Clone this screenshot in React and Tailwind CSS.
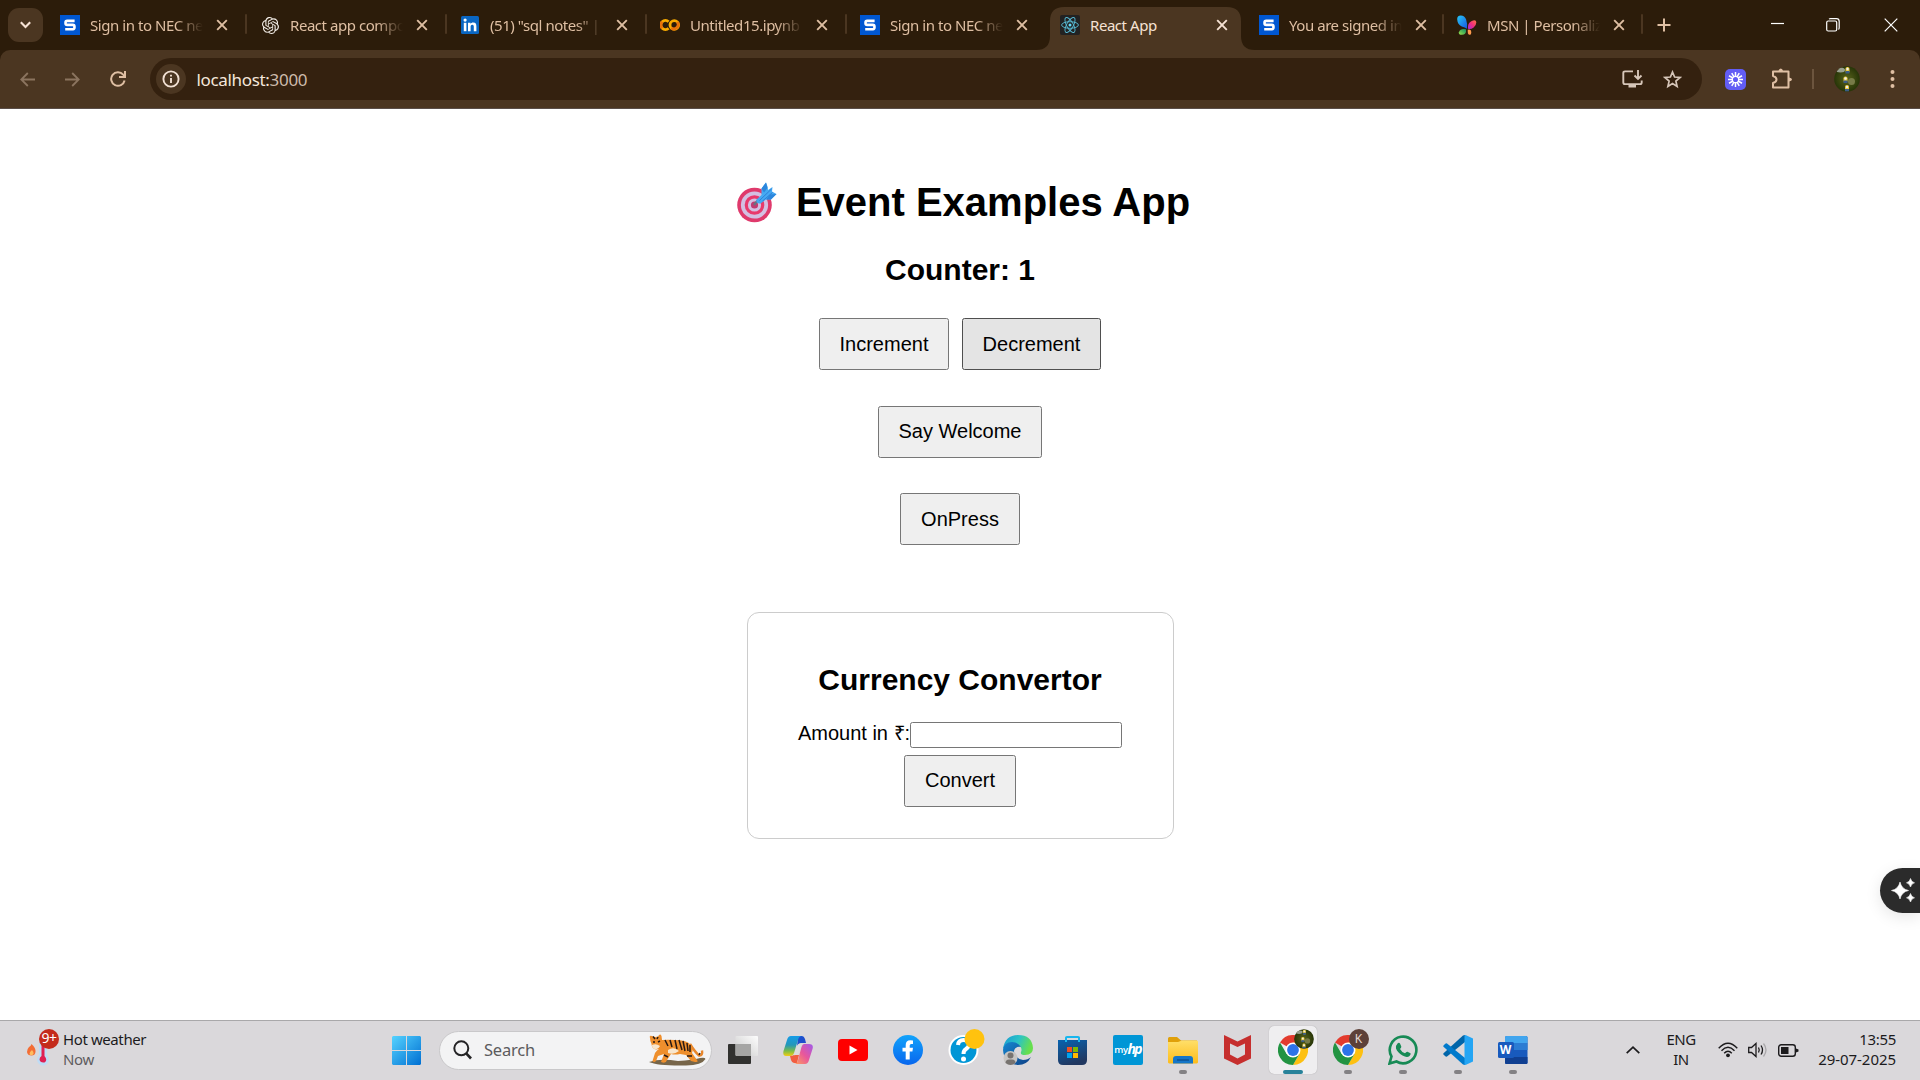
import React from "react";
import { SiOpenai } from "react-icons/si";

const SFavicon = () => (
  <svg width="20" height="20" viewBox="0 0 20 20">
    <rect width="20" height="20" fill="#0057d2" />
    <path d="M14.6 5.9H7.2Q5.5 5.9 5.5 7.9T7.2 9.9H12.8Q14.5 9.9 14.5 12T12.8 14.3H5.2" fill="none" stroke="#fff" strokeWidth="2.6" />
  </svg>
);

const OpenAIFavicon = () => <SiOpenai size={17} color="#f4efe9" />;

const LinkedInFavicon = () => (
  <svg width="18" height="18" viewBox="0 0 18 18">
    <rect width="18" height="18" rx="1.5" fill="#0a66c2" />
    <g fill="#fff">
      <circle cx="4.1" cy="4.1" r="1.6" />
      <rect x="2.8" y="6.8" width="2.6" height="8.4" />
      <path d="M7 6.8h2.5v1.2c.5-.8 1.4-1.4 2.7-1.4 2.6 0 3.2 1.6 3.2 4v4.6h-2.6v-4.2c0-1.2-.2-2.2-1.5-2.2s-1.7 1-1.7 2.2v4.2H7z" />
    </g>
  </svg>
);

const ColabFavicon = () => (
  <svg width="20" height="20" viewBox="0 0 20 20" fill="none" strokeWidth="2.8">
    <path d="M8.600 6.800A4.500 4.500 0 1 0 8.600 13.200" stroke="#f9ab00" />
    <path d="M2.300 6.800A4.500 4.500 0 0 0 2.300 13.200" stroke="#e8710a" />
    <circle cx="14.300" cy="10" r="4.300" stroke="#f9ab00" />
    <path d="M17.300 7A4.300 4.300 0 0 1 11.300 13" stroke="#e8710a" />
  </svg>
);

const ReactFavicon = () => (
  <svg width="20" height="20" viewBox="0 0 20 20">
    <rect width="20" height="20" rx="2" fill="#222" />
    <g transform="translate(10 10)" fill="none" stroke="#58bcd6" strokeWidth=".9">
      <ellipse rx="8.4" ry="3.3" />
      <ellipse rx="8.4" ry="3.3" transform="rotate(60)" />
      <ellipse rx="8.4" ry="3.3" transform="rotate(120)" />
      <circle r="1.5" fill="#61dafb" stroke="none" />
    </g>
  </svg>
);

const MsnFavicon = () => (
  <svg width="21" height="21" viewBox="0 0 21 21">
    <defs>
      <linearGradient id="msnA" x1="0" y1="0" x2="1" y2="1"><stop offset="0" stopColor="#28c7f5" /><stop offset="1" stopColor="#1556e0" /></linearGradient>
      <linearGradient id="msnB" x1="1" y1="0" x2="0" y2="1"><stop offset="0" stopColor="#ff7340" /><stop offset=".5" stopColor="#f02d7c" /><stop offset="1" stopColor="#a02be0" /></linearGradient>
      <linearGradient id="msnC" x1="1" y1="0" x2="0" y2="1"><stop offset="0" stopColor="#0c8f62" /><stop offset="1" stopColor="#9be04a" /></linearGradient>
    </defs>
    <path d="M.2 4Q0 0 4 0Q8 0 9.5 4Q11 8 10.5 14Q8.5 12.5 5 11.5Q.5 9.5 .2 4z" fill="url(#msnA)" />
    <path d="M11.5 14Q11 8 15 6Q20 3.5 20.3 7Q20.3 10 17.5 12.5Q15 14.5 11.5 14z" fill="url(#msnB)" />
    <path d="M9.5 14.5Q10 20.3 5 20.3Q1.5 20.3 2 17.5Q3.5 13.5 9.5 14.5z" fill="url(#msnC)" />
    <path d="M11.3 15Q15 14 15 18Q15 20.5 12.8 20.3Q11 20 11.3 15z" fill="#ff9a4d" />
  </svg>
);

const tabs = [
  { icon: SFavicon, title: "Sign in to NEC ne", width: "w-[200px]", sep: true },
  { icon: OpenAIFavicon, title: "React app compo", width: "w-[200px]", sep: true },
  { icon: LinkedInFavicon, title: "(51) \"sql notes\" |", width: "w-[200px]", sep: true },
  { icon: ColabFavicon, title: "Untitled15.ipynb", width: "w-[200px]", sep: true },
  { icon: SFavicon, title: "Sign in to NEC ne", width: "w-[200px]" },
  { icon: ReactFavicon, title: "React App", width: "w-[199px]", active: true },
  { icon: SFavicon, title: "You are signed in", width: "w-[198px]", sep: true },
  { icon: MsnFavicon, title: "MSN | Personaliz", width: "w-[199px]", sep: true },
];

const CloseX = () => (
  <svg width="12" height="12" viewBox="0 0 12 12" fill="none" stroke="currentColor" strokeWidth="1.9">
    <path d="M1.2 1.2L10.8 10.8M10.8 1.2L1.2 10.8" />
  </svg>
);

function Tab({ icon: Icon, title, width, active, sep }) {
  return (
    <div className={`relative h-[50px] shrink-0 ${width} ${active ? "text-[#f6e2d4]" : "text-[#dfbfa3]"}`}>
      {active && (
        <svg className="absolute -left-[10px] top-[7px]" width="219" height="43" viewBox="0 0 219 43">
          <path d="M0 43Q14 43 14 29V14Q14 0 28 0H191Q205 0 205 14V29Q205 43 219 43z" fill="#4b3621" />
        </svg>
      )}
      <div className="relative flex h-full items-center pl-[14px]">
        <span className="flex w-5 justify-center"><Icon /></span>
        <span className={`ml-[10px] w-[113px] whitespace-nowrap text-[15px] tracking-[-0.45px] ${active ? "" : "[mask-image:linear-gradient(to_right,black_76%,transparent_100%)]"}`}>{title}</span>
        <span className="ml-[13px]"><CloseX /></span>
        {sep && <span className="absolute right-[-1px] top-[14px] h-5 w-[2px] rounded bg-[#4b3621]" />}
      </div>
    </div>
  );
}

const Minion = ({ size }) => (
  <svg width={size} height={size} viewBox="0 0 26 26">
    <defs>
      <clipPath id={`av${size}`}><circle cx="13" cy="13" r="12.8" /></clipPath>
      <radialGradient id={`ag${size}`}><stop offset="0" stopColor="#59631c" /><stop offset="1" stopColor="#263407" /></radialGradient>
    </defs>
    <g clipPath={`url(#av${size})`}>
      <rect width="26" height="26" fill={`url(#ag${size})`} />
      <ellipse cx="6.5" cy="4" rx="4.5" ry="2.5" fill="#98a090" />
      <circle cx="17.5" cy="15.5" r="3.5" fill="#777b47" />
      {[[13.5, 4], [11.5, 13.5], [13, 22]].map(([x, y]) => (
        <g key={y}>
          <rect x={x - 2} y={y - 3} width="4" height="6" rx="1.8" fill="#e8c63c" />
          <rect x={x - 2} y={y + 1} width="4" height="2.5" fill="#3b5c86" />
          <circle cx={x} cy={y - 1} r="1.2" fill="#eee" />
        </g>
      ))}
    </g>
  </svg>
);

function Chrome() {
  return (
    <header className="h-[109px] shrink-0 bg-[#2c1c0a] font-['Noto_Sans',sans-serif]">
      <div className="flex h-[50px]">
        <div className="flex w-[46px] items-center pl-2">
          <div className="flex h-[34px] w-[35px] items-center justify-center rounded-[11px] bg-[#4b3621]">
            <svg width="11" height="8" viewBox="0 0 11 8" fill="none" stroke="#f6e2d4" strokeWidth="2.1"><path d="M.8 1.2L5.5 5.9L10.2 1.2" /></svg>
          </div>
        </div>
        {tabs.map((t, i) => <Tab key={i} {...t} />)}
        <div className="flex items-center pl-[15px]">
          <svg width="14" height="14" viewBox="0 0 14 14" stroke="#dfbfa3" strokeWidth="2"><path d="M7 .5V13.5M.5 7H13.5" /></svg>
        </div>
        <div className="ml-auto flex items-center pr-[22px]">
          <svg width="13" height="14" viewBox="0 0 13 14" stroke="#fff" strokeWidth="1.2"><path d="M0 5.5H13" /></svg>
          <svg className="ml-[42px]" width="14" height="14" viewBox="0 0 14 14" fill="none" stroke="#fff" strokeWidth="1.2"><rect x=".7" y="3" width="10" height="10" rx="1.5" /><path d="M3 1Q3.5 .7 4.5 .7H10.5Q13.2 .7 13.2 3.5V9.5Q13.2 11 12.5 11.5" /></svg>
          <svg className="ml-[44px]" width="14" height="14" viewBox="0 0 14 14" stroke="#fff" strokeWidth="1.2"><path d="M.7 .7L13.3 13.3M13.3 .7L.7 13.3" /></svg>
        </div>
      </div>
      <div className="flex h-[58px] items-center rounded-t-[10px] bg-[#4b3621]">
        <svg className="ml-[20px]" width="15" height="15" viewBox="0 0 15 15" fill="none" stroke="#8b745f" strokeWidth="1.8"><path d="M15 7.5H1.5M7.8 1L1.3 7.5L7.8 14" /></svg>
        <svg className="ml-[30px]" width="15" height="15" viewBox="0 0 15 15" fill="none" stroke="#8b745f" strokeWidth="1.8"><path d="M0 7.5H13.5M7.2 1L13.7 7.5L7.2 14" /></svg>
        <svg className="ml-[30px]" width="16" height="16" viewBox="0 0 16 16" fill="none" stroke="#dfbfa3" strokeWidth="2"><path d="M14.6 9.5A6.8 6.8 0 1 1 13.2 3.6L14.5 5" /><path d="M15 0V6H9" /></svg>
        <div className="ml-[24px] flex h-[42px] w-[1552px] items-center rounded-full bg-[#34210f]">
          <div className="ml-[6px] flex h-[30px] w-[30px] items-center justify-center rounded-full bg-[#4b3621]">
            <svg width="18" height="18" viewBox="0 0 18 18" fill="none" stroke="#f1e0d3" strokeWidth="1.9"><circle cx="9" cy="9" r="7.6" /><path d="M9 8V13M9 4.8V6.6" /></svg>
          </div>
          <span className="ml-[10.500px] mt-px text-[17px] tracking-[-0.33px] text-[#f5e7db]">localhost:<span className="text-[#cdbbab]">3000</span></span>
          <svg className="ml-auto" width="21" height="18" viewBox="0 0 21 18" fill="none" stroke="#d6c6b9" strokeWidth="1.9"><path d="M11 1.4H3Q1.3 1.4 1.3 3V12.5Q1.3 14.1 3 14.1H18Q19.7 14.1 19.7 12.5V10.5M16 0V8.500M12.5 5.5L16 9L19.5 5.5" /><path d="M6.5 14H14V17.5H6.5z" fill="#d6c6b9" stroke="none" /></svg>
          <svg className="ml-[20px] mr-[20px]" width="19" height="19" viewBox="0 0 19 19" fill="none" stroke="#d6c6b9" strokeWidth="1.7"><path d="M9.5 2L11.6 7L17 7.5L12.9 11.1L14.1 16.5L9.5 13.6L4.9 16.5L6.1 11.1L2 7.5L7.4 7z" /></svg>
        </div>
        <svg className="ml-[23px]" width="21" height="21" viewBox="0 0 21 21"><rect width="21" height="21" rx="5" fill="#625df5" /><g transform="translate(10.5 10.5)" stroke="#fff" strokeWidth="1.5">{[0, 30, 60, 90, 120, 150, 180, 210, 240, 270, 300, 330].map((a) => <path key={a} d="M0 -3V-7.5" transform={`rotate(${a})`} />)}<circle r="3.2" fill="none" strokeWidth="1.3" /></g></svg>
        <svg className="ml-[25px]" width="22" height="22" viewBox="0 0 22 22" fill="none" stroke="#dfbfa3" strokeWidth="2" strokeLinejoin="round"><path d="M2 3.5H17.5V19.5H2V15Q5.5 14 5.5 11.5T2 8z" /><path d="M7.5 3Q8 .5 9.8 .5T12 3zM18 9.5Q21 10 21 11.5T18 13.5z" fill="#dfbfa3" stroke="none" /></svg>
        <span className="ml-[19px] h-5 w-[2px] bg-[#6c553e]" />
        <span className="ml-[20px]"><Minion size={26} /></span>
        <svg className="ml-[30px]" width="5" height="20" viewBox="0 0 5 20" fill="#dfbfa3"><circle cx="2.5" cy="3" r="2" /><circle cx="2.5" cy="10" r="2" /><circle cx="2.5" cy="17" r="2" /></svg>
      </div>
      <div className="h-px bg-[#5a4e48]" />
    </header>
  );
}

const Target = () => (
  <svg width="40" height="41" viewBox="0 0 40 41">
    <circle cx="17.5" cy="23" r="17.3" fill="#df3a6c" />
    <circle cx="17.5" cy="23" r="13.6" fill="#d3c0e2" />
    <circle cx="17.5" cy="23" r="9.800" fill="#e83a6c" />
    <circle cx="17.5" cy="23" r="6.6" fill="#d3c0e2" />
    <circle cx="17.5" cy="23" r="3.6" fill="#c23a72" />
    <path d="M17 23L22 17" stroke="#6b7280" strokeWidth="2.500" />
    <path d="M19.500 17.500L24.500 13V6.500L29 .5L30.500 4.500L31 8L35.500 5L35 9.500L39.5 12L34 17.5H29L23.5 21.5Q18.5 22 19.500 17.500z" fill="#45a9f2" />
    <path d="M24.500 6.500L29 .5L30.500 6L27 10.500zM33 12.500L39.5 12L34 17.5H29z" fill="#2b86dc" />
    <path d="M22.500 18.500L34.500 7M25.500 19L35.500 10.500" stroke="#2f7fd6" strokeWidth="1" />
  </svg>
);

const Button = ({ children, pressed, className = "" }) => (
  <button className={`h-[52px] rounded-[2.5px] border text-center text-[20px] leading-[23px] ${pressed ? "border-[#4f4f4f] bg-[#e4e4e4]" : "border-[#767676] bg-[#efefef]"} ${className}`}>{children}</button>
);

function Page() {
  return (
    <main className="relative flex flex-1 flex-col items-center overflow-hidden bg-white font-['Liberation_Sans',Arial,sans-serif] text-black">
      <h1 className="mt-[70px] flex h-[46px] items-center pl-[7px] text-[40px] font-bold leading-[46px]">
        <Target /><span className="ml-[19px]">Event Examples App</span>
      </h1>
      <h2 className="mt-[28px] text-[30px] font-bold leading-[34px]">Counter: 1</h2>
      <div className="mt-[31px] flex gap-[13px]">
        <Button className="w-[130px]">Increment</Button>
        <Button className="w-[139px]" pressed>Decrement</Button>
      </div>
      <Button className="mt-[36px] w-[164px] pb-[2px]">Say Welcome</Button>
      <Button className="mt-[35px] w-[120px]">OnPress</Button>
      <section className="mt-[67px] flex h-[227px] w-[427px] flex-col items-center rounded-[12px] border border-[#ccc]">
        <h2 className="mt-[50px] text-[30px] font-bold leading-[34px]">Currency Convertor</h2>
        <div className="mt-[25px] flex h-[26px] items-center text-[20px]">
          <label className="-mt-[5px]">Amount in ₹:</label>
          <input className="h-[26px] w-[212px] rounded-[2.5px] border border-[#767676] bg-white" />
        </div>
        <Button className="mt-[7px] w-[112px] pb-[2px]">Convert</Button>
      </section>
      <div className="absolute right-0 top-[759px] flex h-[45px] w-10 items-center rounded-l-full bg-[#2b2b2b] pl-[11px] shadow-[0_4px_16px_rgba(0,0,0,0.1)]">
        <svg width="25" height="25" viewBox="0 0 25 25" fill="#fff"><path d="M9 4Q10.5 11 17.5 12.5Q10.5 14 9 21Q7.5 14 .5 12.5Q7.5 11 9 4zM19.5 .5Q20.3 4 23.5 4.8Q20.3 5.6 19.5 9Q18.7 5.6 15.5 4.8Q18.7 4 19.5 .5zM19.5 15.5Q20.3 19 23.5 19.8Q20.3 20.6 19.5 24Q18.7 20.6 15.5 19.8Q18.7 19 19.5 15.5z" stroke="#fff" strokeWidth=".6" /></svg>
      </div>
    </main>
  );
}

const Tiger = () => (
  <svg width="58" height="32" viewBox="0 0 58 32">
    <path d="M1 28Q12 24 30 27Q45 26 52 24Q57 23 57.5 25Q54 31 38 31.5Q10 32 1 28z" fill="#77664a" />
    <path d="M42 10Q47 18 51 21.5Q55 22 54 16.5" fill="none" stroke="#e8862a" strokeWidth="2.4" />
    <path d="M2 4Q1 1 4 2Q7 3.5 10 2.5Q12 -1 13.5 2L14 6Q20 5.5 27 6Q38 6 42 10Q46 14 44 19L49 26Q51 28.5 47 28L43 27L38 21L32 20Q27 21 23 20L19 26Q18 30 13 28L16 20L10 22L8 27Q6 29 4.5 27L7 19Q9 16 11 15Q4 17 3.5 10Q2 7 2 4z" fill="#ee8f2d" />
    <path d="M4 11Q8 9 12 12Q10 16 7 15Q4 15 4 11zM20 16Q26 12 31 17Q26 21 20 19z" fill="#f8e6cd" />
    <path d="M17 6L20 12M22 6L24 13M27 6L29 15M31 6L34 16M35 7L37 17M39 9L40 17M42 11L42 18M16 21L20 23M39 22L44 22M5 2.5L7 5M10 3L9 5M51 21L52 19M5 8L7 8M10 8L12 7" stroke="#291a13" strokeWidth="1.5" />
  </svg>
);

const Windows = () => (
  <svg width="29" height="29" viewBox="0 0 29 29"><defs><linearGradient id="wi" x1="0" y1="0" x2="1" y2="1"><stop stopColor="#55d3ff" /><stop offset="1" stopColor="#006fd2" /></linearGradient></defs><path fill="url(#wi)" d="M1 0H14V14H0V1zM15 0H28L29 1V14H15zM0 15H14V29H1L0 28zM15 15H29V28L28 29H15z" /></svg>
);
const TaskView = () => (
  <svg width="30" height="28" viewBox="0 0 30 28"><defs><linearGradient id="tv" x1="0" x2="1" y1="1" y2="0"><stop stopColor="#c8c8c8" /><stop offset="1" stopColor="#fff" /></linearGradient></defs><rect x="0" y="8" width="23" height="20" rx="1" fill="#31312f" /><rect x="7.5" y="0" width="22.5" height="20" rx="1" fill="url(#tv)" opacity=".95" /><path d="M7.5 8H23V20H8.5L7.5 19z" fill="#a5a5a4" /></svg>
);
const Copilot = () => (
  <svg width="30" height="28" viewBox="0 0 30 28">
    <defs>
      <linearGradient id="ca" x1="0" y1="0" x2="0" y2="1"><stop stopColor="#159ce8" /><stop offset=".45" stopColor="#2497b9" /><stop offset=".75" stopColor="#7cbc47" /><stop offset="1" stopColor="#f3cd13" /></linearGradient>
      <linearGradient id="cb" x1="1" y1="0" x2="0" y2="1"><stop stopColor="#a15bea" /><stop offset=".5" stopColor="#e8579b" /><stop offset="1" stopColor="#ffa35b" /></linearGradient>
    </defs>
    <path d="M15 0H19Q21 0 22 3L23 7H18Q15 7 14 11z" fill="#1d4fcd" />
    <path d="M8 0H19Q16 0 15 4L11 17Q10 20 7 20H3Q-.5 20 .5 15L4 4Q5 0 8 0z" fill="url(#ca)" />
    <path d="M7 20Q10 20 11 19H16L14 27H11Q9 27 8 24z" fill="#f15e42" />
    <path d="M21 8H26Q31 8 29.5 13L26 24Q25 28 22 28H11Q14 28 15 24L18.5 11Q19.5 8 21 8z" fill="url(#cb)" />
    <path d="M14.500 9Q15.500 7.500 18.500 8.300L15.500 17Q14.700 19.200 11 19.200z" fill="#dcdcdf" />
  </svg>
);
const YouTube = () => (<svg width="30" height="22" viewBox="0 0 30 22"><rect width="30" height="22" rx="4" fill="#f00" /><path d="M11.5 6.5L19.5 11L11.5 15.5z" fill="#fff" /></svg>);
const Facebook = () => (<svg width="30" height="30" viewBox="0 0 30 30"><defs><linearGradient id="fb" x1="0" y1="0" x2="0" y2="1"><stop stopColor="#12a3fb" /><stop offset="1" stopColor="#0866ee" /></linearGradient></defs><circle cx="15" cy="15" r="15" fill="url(#fb)" /><path d="M12.7 24.5V16.5H9.5V12.7H12.7V10Q12.7 5.3 17.3 5.3L20 5.5V9H18.2Q16.7 9 16.7 10.5V12.7H20L19.4 16.5H16.7V24.5z" fill="#fff" /></svg>);
const Help = () => (<svg className="-mt-[7px]" width="37" height="36" viewBox="0 0 37 36"><circle cx="15.5" cy="21" r="15" fill="#fff" /><circle cx="15.5" cy="21" r="13" fill="#0096d6" /><path d="M10 16Q10.5 11 15.5 11Q21 11 21 15.5Q21 18 18 20Q15.5 21.5 15.5 25" fill="none" stroke="#fff" strokeWidth="4" /><circle cx="15.5" cy="30" r="2.5" fill="#fff" /><circle cx="26.5" cy="10" r="10" fill="#ffc20e" /></svg>);
const Edge = () => (
  <svg width="30" height="30" viewBox="0 0 30 30">
    <defs><linearGradient id="ea" x1="0" y1="0" x2="1" y2=".3"><stop stopColor="#1899d4" /><stop offset=".55" stopColor="#2bc3c6" /><stop offset="1" stopColor="#67df4d" /></linearGradient><linearGradient id="eb" x1="0" y1="0" x2="1" y2="1"><stop stopColor="#1686d0" /><stop offset="1" stopColor="#0d4086" /></linearGradient></defs>
    <path d="M0 14Q2 0 15 0Q29 0 30 13Q30 20 22 20Q17 20 18 17Q20 12 14 9Q6 6 0 14z" fill="url(#ea)" />
    <path d="M0 15Q1 7 9 7Q15 7 18 12Q12 11 11 16Q11 23 20 25Q25 25 28 22Q24 30 15 30Q1 29 0 15z" fill="url(#eb)" />
    <circle cx="7.5" cy="23" r="7" fill="#c7c5c3" /><circle cx="7.5" cy="20.5" r="3" fill="#777370" /><path d="M2.5 28Q2.5 24.5 6 24.5H9Q12.5 24.5 12.5 28Q10 30 7.5 30T2.5 28z" fill="#777370" />
  </svg>
);
const Store = () => (<svg width="29" height="29" viewBox="0 0 29 29"><defs><linearGradient id="st" x1="0" y1="0" x2=".4" y2="1"><stop stopColor="#0863b0" /><stop offset="1" stopColor="#213861" /></linearGradient></defs><path d="M0 4H29V24Q29 29 24 29H5Q0 29 0 24z" fill="url(#st)" /><path d="M8 6V1.5Q8 1 9 1H20Q21 1 21 1.5V6" fill="none" stroke="#18b6ee" strokeWidth="2" /><rect x="9" y="11" width="5" height="5" fill="#f25022" /><rect x="15" y="11" width="5" height="5" fill="#7fba00" /><rect x="9" y="17" width="5" height="5" fill="#00a4ef" /><rect x="15" y="17" width="5" height="5" fill="#ffb900" /></svg>);
const MyHp = () => (<div className="flex h-[30px] w-[30px] items-center justify-center rounded-[2px] bg-[#0096d6] font-['Open_Sans',sans-serif] leading-none text-white"><span className="text-[9.5px] font-semibold tracking-[-0.4px]">my</span><span className="mb-[2px] text-[14px] font-bold italic tracking-[-1.8px]">hp</span></div>);
const Folder = () => (<svg width="30" height="27" viewBox="0 0 30 27"><defs><linearGradient id="fo" x1="0" y1="0" x2="0" y2="1"><stop stopColor="#ffdf69" /><stop offset="1" stopColor="#fdbc1a" /></linearGradient></defs><path d="M0 1.5Q0 0 1.5 0H9L13 3.5H29V8H0z" fill="#e0a00a" /><path d="M0 5H10L14 3.5H29L30 4.5V25.5L29 26.5H1L0 25.5z" fill="url(#fo)" /><path d="M5 26.5V22Q5 19 8 19H22Q25 19 25 22V26.5z" fill="#1576c8" /><path d="M9 23H21" stroke="#0b4a86" strokeWidth="1.2" /></svg>);
const McAfee = () => (<svg width="27" height="30" viewBox="0 0 27 30"><path d="M0 0L13.5 6.5L27 0V23.5L13.5 30L0 23.5zM6 8.5V19.5L13.5 23.5L21 19.5V8.5L13.5 12z" fill="#c62f2e" fillRule="evenodd" /></svg>);
const ChromeIcon = ({ badge }) => (
  <div className="relative h-[30px] w-[30px]">
    <svg width="30" height="30" viewBox="-15 -15 30 30">
      <path d="M0 0L-13 -7.5A15 15 0 0 1 13 -7.5z" fill="#e33b2e" />
      <path d="M0 -7.5H13A15 15 0 0 1 0 15L6.5 3.75z" fill="#fdc012" />
      <path d="M-6.5 3.75L-13 -7.5A15 15 0 0 0 0 15L6.5 3.75z" fill="#229342" />
      <circle r="7.5" fill="#fff" /><circle r="5.9" fill="#2d73e8" />
    </svg>
    <span className="absolute -right-[6px] -top-[6px]">{badge}</span>
  </div>
);
const WhatsApp = () => (<svg width="30" height="30" viewBox="0 0 30 30"><path d="M1.5 28.5L3.5 21.5A13.3 13.3 0 1 1 8.5 26.5z" fill="none" stroke="#178a55" strokeWidth="2.6" /><path d="M9.5 8.5Q11 7 12 8.5L13.3 11.5Q13.5 12.5 12 14Q13.5 17 17 18.3Q18.5 16.3 19.5 16.7L22.5 18.2Q23.3 19 21.5 21Q19 23 14.5 20.5Q9.5 17.5 8 13.5Q7.5 10.5 9.5 8.5z" fill="#178a55" /></svg>);
const VsCode = () => (<svg width="30" height="30" viewBox="0 0 30 30"><path d="M22 7L4 21.5Q3 22 2 21L.5 19.5Q0 18.8 .5 18.3L20 .5L22 0z" fill="#0065a9" /><path d="M22 23L4 8.5Q3 8 2 9L.5 10.5Q0 11.2 .5 11.7L20 29.5L22 30z" fill="#007acc" /><path d="M21.5 .5L22.500 0L30 3.5V26.5L22.500 30L21.5 29.5z" fill="#24a5f4" /></svg>);
const Word = () => (
  <div className="relative h-[28px] w-[30px]">
    <svg width="30" height="28" viewBox="0 0 30 28"><rect x="7" width="22.5" height="28" rx="1.5" fill="#185abd" /><path d="M7 7V1.5Q7 0 8.5 0H28Q29.5 0 29.5 1.5V7z" fill="#41a5ee" /><path d="M7 7H29.5V14H7z" fill="#2b7cd3" /><path d="M7 21H29.5V26.5Q29.5 28 28 28H8.5Q7 28 7 26.5z" fill="#103f91" /><rect x="0" y="6" width="16" height="16" rx="1.5" fill="#185abd" /></svg>
    <span className="absolute left-0 top-[6px] w-4 text-center text-[12px] font-bold leading-4 text-white">W</span>
  </div>
);

const apps = [
  { icon: <TaskView /> }, { icon: <Copilot /> }, { icon: <YouTube /> }, { icon: <Facebook /> },
  { icon: <span className="ml-[7px]"><Help /></span> }, { icon: <Edge /> }, { icon: <Store /> }, { icon: <MyHp /> },
  { icon: <Folder />, open: true }, { icon: <McAfee /> },
  { icon: <ChromeIcon badge={<Minion size={20} />} />, active: true },
  { icon: <ChromeIcon badge={<span className="flex h-5 w-5 items-center justify-center rounded-full bg-[#5d4038] text-[12px] text-[#e4d8d3]">K</span>} />, open: true },
  { icon: <WhatsApp />, open: true }, { icon: <VsCode />, open: true }, { icon: <Word />, open: true },
];

function Taskbar() {
  return (
    <footer className="flex h-[60px] shrink-0 items-center border-t border-[#a9a8aa] bg-[#dad8db] pb-px font-['Noto_Sans',sans-serif] text-[15px] leading-5 text-[#1c1b1d]">
      <div className="flex w-[392px] items-center pl-[27px]">
        <div className="relative -mt-[3px] h-[36px] w-[32px]">
          <svg width="33" height="36" viewBox="0 0 33 36">
            <path d="M4.5 13Q9 17 8.5 21Q8 24.5 4.5 24.5Q.5 24.5 0 21Q0 18 2 16Q4 15 4.5 13z" fill="#f36d35" /><path d="M5 19Q7 21 6.5 23Q4 25.5 2.5 23Q2.5 21 5 19z" fill="#ffbd60" />
            <path d="M12 12H20V24Q24 29 20 33Q16 36.5 12 33Q8 29 12 24z" fill="#bedcf5" /><path d="M14.5 12H17.5V25Q21 29 17.5 31.5Q13 32 12.5 28.5Q12.5 26 14.5 25z" fill="#df1f52" />
          </svg>
          <span className="absolute right-0 -top-[2px] flex h-5 w-5 items-center justify-center rounded-full bg-[#c42b1c] pb-px text-[14px] tracking-[-0.5px] text-white">9+</span>
        </div>
        <div className="-mt-[3px] ml-[4px] tracking-[-0.4px]"><div>Hot weather</div><div className="text-[#5e5c5f]">Now</div></div>
      </div>
      <Windows />
      <div className="ml-[18px] flex h-[39px] w-[273px] items-center rounded-full border border-[#c9c8ca] bg-[#f3f3f4] pl-[13px] pr-[5px]">
        <svg width="19" height="20" viewBox="0 0 19 20" fill="none" stroke="#242325" strokeWidth="2"><circle cx="8.3" cy="8.3" r="7" /><path d="M13.2 13.3L18 18.5" strokeWidth="2.6" /></svg>
        <span className="ml-[12px] text-[16.5px] tracking-[-0.2px] text-[#5c5b5d]">Search</span>
        <span className="ml-auto"><Tiger /></span>
      </div>
      <div className="ml-[3px] flex">
        {apps.map((a, i) => (
          <div key={i} className="flex w-[55px] justify-center">
            <div className={`relative flex h-12 w-12 items-center justify-center rounded-[5px] ${a.active ? "bg-[#efeef0] shadow-[0_0_1px_#999]" : ""}`}>
              {a.icon}
              {a.active && <span className="absolute bottom-0 h-1 w-5 rounded-full bg-[#28829a]" />}
              {a.open && <span className="absolute bottom-0 h-1 w-2 rounded-full bg-[#838184]" />}
            </div>
          </div>
        ))}
      </div>
      <div className="ml-auto flex items-center pr-[24px]">
        <svg width="14" height="8" viewBox="0 0 14 8" fill="none" stroke="#1c1b1d" strokeWidth="1.7"><path d="M.7 7.2L7 1.2L13.3 7.2" /></svg>
        <div className="-mt-[2px] ml-[24px] w-[34px] text-center tracking-[-0.5px]"><div>ENG</div><div>IN</div></div>
        <svg className="ml-[20px]" width="20" height="16" viewBox="0 0 20 16" fill="none" stroke="#1c1b1d" strokeWidth="1.4"><path d="M.7 6.2Q10 -3.6 19.3 6.2M3.5 8.7Q10 1.8 16.5 8.7M6.2 11.3Q10 7.2 13.8 11.3" /><circle cx="10" cy="13.3" r="1.9" fill="#1c1b1d" stroke="none" /></svg>
        <svg className="ml-[10px]" width="20" height="16" viewBox="0 0 20 16" fill="none" stroke="#1c1b1d" strokeWidth="1.3"><path d="M.7 5.5H3.5L8 1.5V14.5L3.5 10.5H.7z" /><path d="M10.5 5.5Q12 8 10.5 10.5M13 3.5Q16 8 13 12.5" /><path d="M15.5 1.5Q20.5 8 15.5 14.5" stroke="#aaa8ab" /></svg>
        <svg className="ml-[10px]" width="21" height="13" viewBox="0 0 21 13" fill="none" stroke="#1c1b1d" strokeWidth="1.4"><rect x=".7" y=".7" width="16.6" height="11.6" rx="2.5" /><rect x="3" y="3" width="7.5" height="7" fill="#1c1b1d" stroke="none" /><path d="M18 4.5L20.5 5.5V7.5L18 8.5z" fill="#1c1b1d" stroke="none" /></svg>
        <div className="-mt-[3px] ml-[18px] w-[79px] whitespace-nowrap text-right tracking-[-0.05px]"><div className="tracking-[-0.3px]">13:55</div><div>29-07-2025</div></div>
      </div>
    </footer>
  );
}

export default function App() {
  return (
    <div className="flex h-[1080px] w-[1920px] flex-col overflow-hidden bg-white">
      <Chrome />
      <Page />
      <Taskbar />
    </div>
  );
}
